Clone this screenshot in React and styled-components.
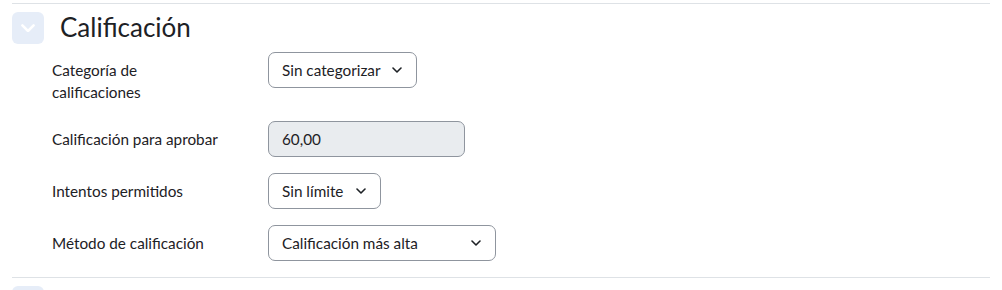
import React from 'react';
import styled, {createGlobalStyle} from 'styled-components';

const GlobalStyle = createGlobalStyle`
    body {
        margin: 0;
        background: #fff;
        font-family: Lato, "Noto Sans", sans-serif;
        color: #1d2125;
        overflow: hidden;
    }
`;

const Page = styled.div`
    padding: 3px 12px 0 12px;
`;

const Section = styled.section`
    border-top: 1px solid #dee2e6;
    padding-top: 8px;
`;

const Header = styled.div`
    display: flex;
    align-items: center;
    gap: 16px;
    height: 32px;
    margin-bottom: 8px;
`;

const Toggle = styled.button`
    width: 32px;
    height: 32px;
    border: 0;
    border-radius: 6px;
    background: #e6edf8;
    display: flex;
    align-items: center;
    justify-content: center;
    padding: 0;
`;

const Title = styled.h3`
    margin: 0;
    font-size: 26px;
    font-weight: 400;
    line-height: 1.2;
`;

const Form = styled.div`
    padding-left: 40px;
`;

const Row = styled.div`
    display: grid;
    grid-template-columns: 216px 1fr;
    align-items: start;
    margin-bottom: 16px;
    min-height: ${p => p.$tall ? '53px' : '36px'};
`;

const Label = styled.label`
    font-size: 15.3px;
    line-height: 22px;
    padding-top: 7px;
    width: ${p => p.$narrow ? '120px' : 'auto'};
`;

const Select = styled.div`
    box-sizing: border-box;
    width: ${p => p.$w}px;
    height: 36px;
    border: 1px solid #8f959e;
    border-radius: 7px;
    display: flex;
    align-items: center;
    justify-content: space-between;
    padding: 0 14px 0 13px;
    font-size: 15.3px;
`;

const Input = styled.div`
    box-sizing: border-box;
    width: 197px;
    height: 36px;
    border: 1px solid #8f959e;
    border-radius: 7px;
    background: #e9ecef;
    display: flex;
    align-items: center;
    padding: 0 13px;
    font-size: 15.3px;
`;

const Chevron = ({color = '#1d2125', size = 10, sw = 1.6}) => (
    <svg width={size} height={size * 0.6} viewBox="0 0 10 6" fill="none">
        <path d="M1 1l4 4 4-4" stroke={color} strokeWidth={sw} strokeLinecap="round" strokeLinejoin="round" />
    </svg>
)

const App = () => {
    return (
        <>
            <GlobalStyle />
            <Page>
                <Section>
                    <Header>
                        <Toggle aria-label="Contraer">
                            <Chevron color="#fff" size={14} sw={1.8} />
                        </Toggle>
                        <Title>Calificación</Title>
                    </Header>
                    <Form>
                        <Row $tall>
                            <Label $narrow>Categoría de calificaciones</Label>
                            <Select $w={149}>Sin categorizar <Chevron /></Select>
                        </Row>
                        <Row>
                            <Label>Calificación para aprobar</Label>
                            <Input>60,00</Input>
                        </Row>
                        <Row>
                            <Label>Intentos permitidos</Label>
                            <Select $w={113}>Sin límite <Chevron /></Select>
                        </Row>
                        <Row>
                            <Label>Método de calificación</Label>
                            <Select $w={228}>Calificación más alta <Chevron /></Select>
                        </Row>
                    </Form>
                </Section>
                <Section>
                    <Header>
                        <Toggle aria-label="Expandir">
                            <Chevron color="#fff" size={14} sw={1.8} />
                        </Toggle>
                    </Header>
                </Section>
            </Page>
        </>
    )
}

export default App;
